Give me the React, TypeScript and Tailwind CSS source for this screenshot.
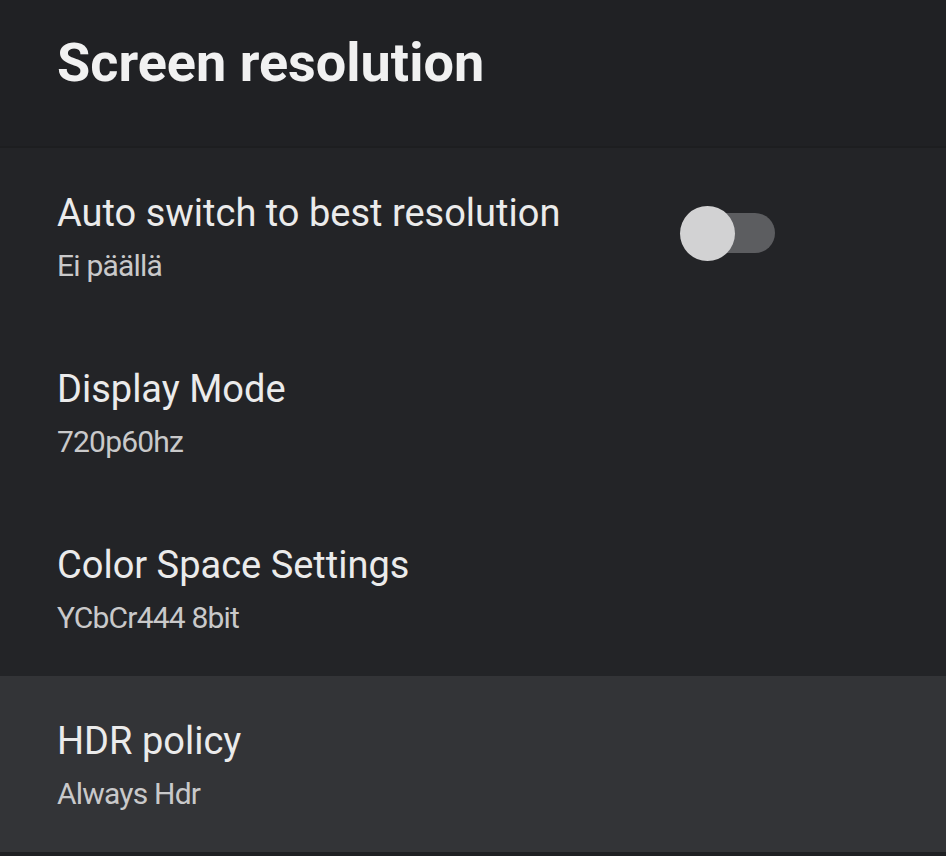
import React from "react";

function Toggle() {
  return (
    <div className="relative w-[95px] h-[56px] flex items-center">
      <div className="absolute left-[20px] right-0 h-[40px] rounded-full bg-[#5c5d60]" />
      <div className="absolute left-0 w-[55px] h-[55px] rounded-full bg-[#d2d2d3]" />
    </div>
  );
}

function Row({ title, sub, active, toggle }: { title: string; sub: string; active?: boolean; toggle?: boolean }) {
  return (
    <div className={`h-[176px] flex items-start pl-[57px] ${active ? "bg-[#333437]" : ""}`}>
      <div className="flex flex-col pt-[43px] w-[623px]">
        <div className="text-[38px] leading-[44px] text-[#ebebeb]">{title}</div>
        <div className="text-[30px] leading-[34px] mt-[14px] text-[#c9c9ca] tracking-[-0.8px]">{sub}</div>
      </div>
      {toggle && (
        <div className="pt-[57px]">
          <Toggle />
        </div>
      )}
    </div>
  );
}

export default function App() {
  return (
    <div className="w-[946px] h-[856px] bg-[#232427] flex flex-col" style={{ fontFamily: "Roboto, 'Noto Sans', sans-serif" }}>
      <div className="h-[148px] bg-[#202124] pl-[57px] pt-[31px] border-b-2 border-[#1d1e20]">
        <div className="text-[54px] leading-[64px] font-bold text-[#f1f1f1]">Screen resolution</div>
      </div>
      <Row title="Auto switch to best resolution" sub="Ei päällä" toggle />
      <Row title="Display Mode" sub="720p60hz" />
      <Row title="Color Space Settings" sub="YCbCr444 8bit" />
      <Row title="HDR policy" sub="Always Hdr" active />
      <div className="flex-1 bg-[#1f2023]" />
    </div>
  );
}
